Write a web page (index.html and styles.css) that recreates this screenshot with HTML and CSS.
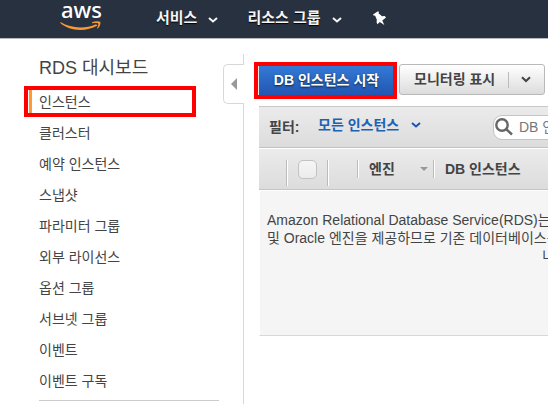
FILE: index.html
```html
<!DOCTYPE html>
<html lang="ko">
<head>
<meta charset="utf-8">
<title>RDS</title>
<link rel="stylesheet" href="styles.css">
</head>
<body>
<header class="topbar">
  <a class="logo"><span class="logo-word">aws</span>
    <svg class="smile" width="42" height="10" viewBox="0 0 42 10"><path d="M.5 1C11 7.500 25 8 36 3.200L37.500 4.500C26 11 10 10.500.300 2Z"/><path d="M32 1.300C35 .100 38 0 40.300.800C41 3 39.500 6 37.500 7.700L37 7.300C38 5 38.800 3 38.200 2.400C37.500 1.700 35 2 32.200 2.200Z"/></svg>
  </a>
  <nav class="menu">
    <a class="menu-item">서비스<svg width="10" height="6" viewBox="0 0 10 6"><path class="chev" d="M1 1L5 4.500L9 1"/></svg></a>
    <a class="menu-item">리소스 그룹<svg width="10" height="6" viewBox="0 0 10 6"><path class="chev" d="M1 1L5 4.500L9 1"/></svg></a>
    <svg class="pin" width="14" height="15" viewBox="0 0 14 15"><path d="M0 3.500L5 .300L6 1L5.500 2.300L9 5.200L11.700 5L13 6.500L9.300 9.500L11.300 14L6.800 11L4.500 13.300L3.600 11.500L3.800 8.500L2 4.500L.800 4.700Z"/></svg>
  </nav>
</header>
<div class="layout">
  <aside class="sidebar">
    <h1>RDS 대시보드</h1>
    <ul class="links">
      <li class="active">인스턴스</li>
      <li>클러스터</li>
      <li>예약 인스턴스</li>
      <li>스냅샷</li>
      <li>파라미터 그룹</li>
      <li>외부 라이선스</li>
      <li>옵션 그룹</li>
      <li>서브넷 그룹</li>
      <li>이벤트</li>
      <li>이벤트 구독</li>
    </ul>
    <button class="collapse" aria-label="접기"></button>
  </aside>
  <main class="content">
    <div class="actions">
      <button class="btn primary">DB 인스턴스 시작</button>
      <button class="btn split"><span>모니터링 표시</span><i></i><svg width="10" height="7" viewBox="0 0 10 7"><path class="chev" d="M1 1.200L5 5L9 1.200"/></svg></button>
    </div>
    <section class="panel">
      <div class="filter">
        <b>필터:</b>
        <a class="filter-value">모든 인스턴스<svg width="10" height="6" viewBox="0 0 10 6"><path class="chev" d="M1 1L5 4.500L9 1"/></svg></a>
        <div class="search"><svg width="18" height="18" viewBox="0 0 18 18"><circle cx="7" cy="7" r="5.700"/><path d="M11 11L17 16.500"/></svg><span>DB 인스턴스</span></div>
      </div>
      <div class="columns">
        <div class="col handle"></div>
        <div class="col check"><span class="box"></span></div>
        <div class="col expand"></div>
        <div class="col engine">엔진<span class="sort"></span></div>
        <div class="col name">DB 인스턴스</div>
      </div>
      <div class="empty">
        <p>Amazon Relational Database Service(RDS)는</p>
        <p>및 Oracle 엔진을 제공하므로 기존 데이터베이스를</p>
        <p class="last">니다.</p>
      </div>
    </section>
  </main>
</div>
</body>
</html>
```
FILE: styles.css
```css
* { box-sizing: border-box; }
body {
  margin: 0;
  width: 548px;
  height: 404px;
  overflow: hidden;
  background: #fff;
  color: #444;
  font: 14px/18px "Liberation Sans", "Noto Sans CJK KR", sans-serif;
}
button { font: inherit; padding: 0; }
.chev { fill: none; stroke: currentColor; stroke-width: 2; }

.topbar {
  display: flex;
  height: 39px;
  background: #283140;
  border-bottom: 1px solid #b9b9bd;
  color: #f5f5f5;
}
.logo { width: 156px; padding: 0 0 0 60px; }
.logo-word {
  display: block;
  height: 21px;
  padding-left: 1px;
  font: 500 22px/19px "Noto Sans", sans-serif;
  color: #fff;
}
.smile { display: block; fill: #f79a34; }
.menu { display: flex; height: 36px; align-items: center; }
.menu-item {
  display: flex;
  align-items: center;
  font-size: 15px;
  font-weight: bold;
  text-shadow: 0 1px 1px #000;
}
.menu-item svg { margin: 3px 29px 0 11px; }
.pin { margin: 0 0 0 2px; fill: #fff; }

.layout { display: flex; height: 365px; }
.sidebar {
  position: relative;
  width: 244px;
  flex: none;
  margin-top: 15px;
  padding: 0 24px 0 28px;
  border-right: 1px solid #d8d8d8;
}
.sidebar h1 { margin: 0 0 5px 11px; padding-top: 1px; font-size: 18px; font-weight: normal; line-height: 26px; }
.links { margin: 0; padding: 0; list-style: none; }
.links li { height: 31px; padding-left: 11px; line-height: 30px; }
.links .active {
  width: 172px;
  height: 31px;
  margin: 0 0 1px -4px;
  padding-left: 11px;
  border: 4px solid #f00;
  line-height: 24px;
  background: linear-gradient(#ff9933, #ff9933) 1px 0 / 3px 100% no-repeat;
}
.links::after { content: ""; display: block; height: 1px; margin: 3px 0 0 11px; width: 180px; background: #ccc; }
.collapse {
  position: absolute;
  left: 223px;
  top: 10px;
  width: 21px;
  height: 40px;
  border: 1px solid #d8d8d8;
  border-right: 0;
  border-radius: 5px 0 0 5px;
  background: #fff;
}
.collapse::before {
  content: "";
  display: block;
  margin-left: 7px;
  width: 0;
  border: 6px solid transparent;
  border-left: 0;
  border-right-color: #999;
}

.content { width: 304px; flex: none; padding: 23px 0 0 10px; }
.actions { display: flex; align-items: flex-start; gap: 2px; height: 44px; }
.btn { font-weight: bold; white-space: nowrap; }
.primary {
  width: 143px;
  height: 37px;
  padding: 0 0 2px 2px;
  border: 4px solid #f00;
  background: linear-gradient(#3479d6, #2256b2);
  box-shadow: inset 1px 0 #eee;
  color: #fff;
  text-shadow: 0 1px 2px #123;
}
.split {
  display: flex;
  align-items: center;
  width: 146px;
  height: 31px;
  margin-top: 2px;
  padding: 0 0 1px 14px;
  border: 1px solid #b9b9b9;
  border-radius: 3px;
  background: linear-gradient(#fff, #dcdcdc);
  color: #444;
}
.split i { width: 1px; height: 16px; margin: 2px 12px 0 13px; background: #bbb; }

.panel { margin-left: 5px; width: 289px; overflow: hidden; }
.filter {
  display: flex;
  align-items: center;
  height: 42px;
  padding-left: 10px;
  border-top: 1px solid #c8c8c8;
  border-bottom: 1px solid #c2c2c2;
  background: linear-gradient(#ebebeb, #dcdcdc);
  white-space: nowrap;
}
.filter b { flex: none; width: 49px; padding-top: 0; }
.filter-value { flex: none; display: flex; align-items: center; width: 175px; padding-bottom: 4px; font-weight: bold; color: #1b62b4; }
.filter-value svg { margin-left: 12px; color: #1d51b5; }
.search {
  display: flex;
  align-items: center;
  flex: none;
  width: 220px;
  height: 25px;
  border: 1px solid #c4c4c4;
  border-radius: 9px;
  background: #fff;
  color: #777;
}
.search svg { margin: 0 6px 0 1px; fill: none; stroke: #666; stroke-width: 2.4; }
.columns {
  display: flex;
  height: 42px;
  padding-top: 11px;
  border-top: 1px solid #fff;
  border-bottom: 1px solid #c4c4c4;
  background: linear-gradient(#ebebeb, #dcdcdc);
  font-weight: bold;
}
.col { height: 18px; border-right: 1px solid #bbb; box-shadow: 1px 0 #fff; }
.handle { width: 28px; height: 26px; }
.check { width: 41px; height: 26px; padding-left: 11px; }
.box { display: block; width: 19px; height: 19px; border: 1px solid #c2c2c2; border-radius: 5px; background: linear-gradient(#f5f5f5, #ececec); }
.expand { width: 30px; }
.engine { display: flex; align-items: center; justify-content: space-between; width: 76px; padding: 0 5px 0 11px; }
.sort { border: 4px solid transparent; border-top-color: #999; border-bottom: 0; }
.name { padding-left: 11px; border: 0; box-shadow: none; }
.empty {
  height: 146px;
  padding: 20px 0 0 7px;
  border-top: 1px solid #fff;
  border-left: 1px solid #fff;
  border-bottom: 1px solid #d9dcc2;
  background: #f5f5f5;
  white-space: nowrap;
}
.empty p { margin: 0; height: 18px; }
.empty .last { padding-left: 275px; }
```
